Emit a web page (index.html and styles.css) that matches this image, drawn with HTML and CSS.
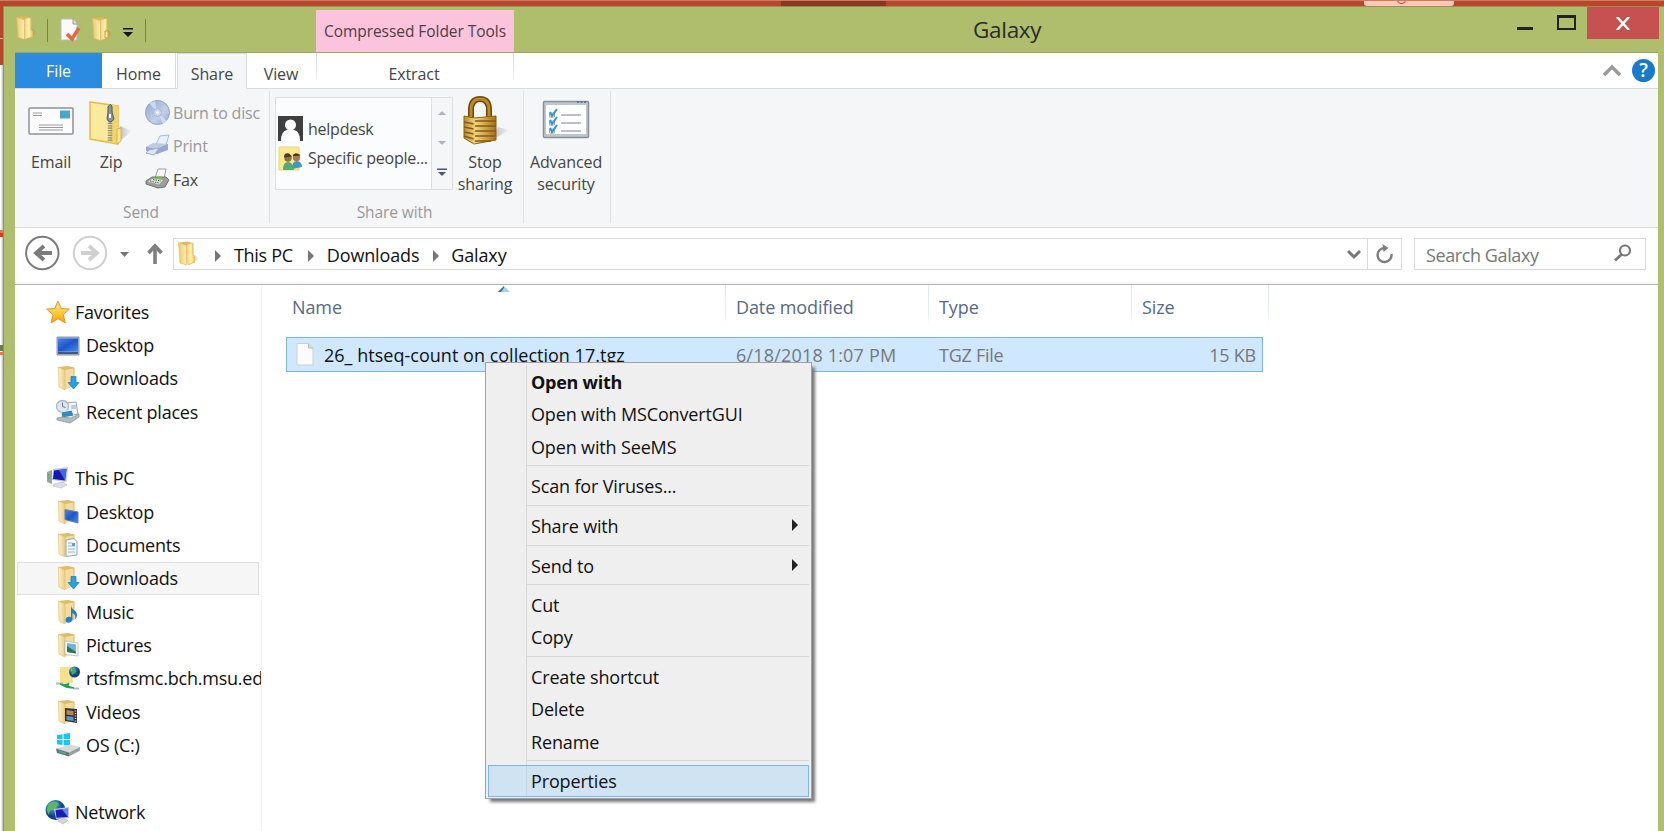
FILE: index.html
```html
<!DOCTYPE html>
<html lang="en"><head><meta charset="utf-8"><title>Galaxy</title><link rel="stylesheet" href="styles.css"></head>
<body>
<svg width="0" height="0" class="defs">
<defs>
<linearGradient id="gy" x1="0" x2="1"><stop offset="0" stop-color="#e9d489"/><stop offset=".5" stop-color="#fdf0b4"/><stop offset="1" stop-color="#ecc65c"/></linearGradient>
<linearGradient id="gold" x1="0" x2="1"><stop offset="0" stop-color="#b98a2a"/><stop offset=".35" stop-color="#f3d67e"/><stop offset="1" stop-color="#a8700f"/></linearGradient>
<linearGradient id="scr" x1="0" x2="1" y2="1"><stop offset="0" stop-color="#4f86e0"/><stop offset=".5" stop-color="#1d55cc"/><stop offset="1" stop-color="#4a8cf0"/></linearGradient>
<linearGradient id="disc" x1="0" x2="1" y2="1"><stop offset="0" stop-color="#8ea6cc"/><stop offset=".6" stop-color="#c3d0e8"/><stop offset="1" stop-color="#92aad2"/></linearGradient>
<radialGradient id="globe" cx=".35" cy=".3"><stop offset="0" stop-color="#bfe8f8"/><stop offset=".5" stop-color="#2f7ec4"/><stop offset="1" stop-color="#123f8c"/></radialGradient>
<linearGradient id="star" x1="0" x2="0" y2="1"><stop offset="0" stop-color="#ffe9a0"/><stop offset=".6" stop-color="#ffc62e"/><stop offset="1" stop-color="#f39a13"/></linearGradient>
<linearGradient id="shade" x1="0" x2="1"><stop offset="0" stop-color="#777" stop-opacity=".6"/><stop offset="1" stop-color="#888" stop-opacity="0"/></linearGradient>
<linearGradient id="front" x1="0" x2="1"><stop offset="0" stop-color="#ecc96c"/><stop offset="1" stop-color="#fbeeb5"/></linearGradient>
<linearGradient id="flap" x1="0" x2="1"><stop offset="0" stop-color="#fdf3c9"/><stop offset="1" stop-color="#eacb83"/></linearGradient>
<symbol id="folder" viewBox="0 0 24 24"><path d="M12 23.500l11-6.500-6-4z" fill="url(#shade)"/><path d="M3 1l7-.8 6.500 1.300V14l1.500 1v6l-7 2.500z" fill="#dfb955"/><path d="M10 3l5.500-1.300V14l2 1.200v5.300L10 23z" fill="url(#gy)"/><path d="M1.500 1l8 3v19.500l-6.500-2z" fill="url(#front)" stroke="#dbb95c" stroke-width=".6"/></symbol>
<symbol id="sfolder" viewBox="0 0 24 24"><path d="M3 1l9-1 6.500 1.500V20L9 23z" fill="#dcbb6a"/><path d="M9 4l8.500-1.500v17L9 23.500z" fill="#f4dc9c"/><path d="M2.500 1L9 4v20l-6-3z" fill="url(#flap)" stroke="#dcc07a" stroke-width=".7"/></symbol>
</defs></svg>
<div class="backdrop"><i class="seg dark"></i><i class="seg pale"></i></div>
<div class="edge"><i class="e1"></i><i class="e5"></i><i class="e2"></i><i class="e3"></i><i class="e4"></i></div>
<main class="window">
<header class="titlebar">
 <div class="quick">
  <svg class="q1" width="24" height="25"><use href="#folder" width="24" height="24"/></svg><i class="bar b1"></i>
  <svg class="q2" width="22" height="24" viewBox="0 0 22 24"><path d="M1 1h12l4 4v17H1z" fill="#fafafa" stroke="#bbb"/><path d="M13 1v5h4" fill="#ddd" stroke="#999"/><path d="M7 16l5 5 7-11" fill="none" stroke="#e8683c" stroke-width="3.600"/></svg>
  <svg class="q3" width="20" height="25"><use href="#folder" width="24" height="24"/><path d="M14 14h3v7h-3z" fill="#fff0b0" stroke="#cc9426"/></svg>
  <svg class="q4" width="10" height="10"><path d="M0 0h10v1.500H0zM0 4h10L5 9z" fill="#151515"/></svg><i class="bar b2"></i>
 </div>
 <div class="context">Compressed Folder Tools</div>
 <h1>Galaxy</h1>
 <div class="winbtns">
  <svg width="70" height="32"><path d="M0 20h16v3H0z" fill="#222"/><path d="M40 8h19v15H40zM42 11v10h15V11z" fill="#222" fill-rule="evenodd"/></svg>
  <div class="close"><svg width="14" height="13"><path d="M1 0l12 13M13 0L1 13" stroke="#fff" stroke-width="2.500"/></svg></div>
 </div>
</header>
<nav class="tabs">
 <div class="file">File</div><div class="tab home">Home</div><div class="tab share">Share</div><div class="tab view">View</div><div class="tab extract">Extract</div>
 <svg class="chev" width="18" height="13"><path d="M1 12l8-8 8 8" fill="none" stroke="#9b9b9b" stroke-width="3.600"/></svg>
 <div class="help">?</div>
</nav>
<section class="ribbon">
 <div class="group send"><div class="gbody">
  <div class="big email"><svg width="46" height="48" viewBox="0 0 46 48"><rect x="1" y="11" width="44" height="26" rx="1" fill="#fcfcfc" stroke="#8e9296" stroke-width="1.500"/><rect x="32" y="13.500" width="10" height="8" fill="#48a8cc"/><path d="M5 16h9M5 18.500h9M11 28h24M11 30.500h24M11 33h24" stroke="#999" stroke-width="1.200"/></svg><span>Email</span></div>
  <div class="big zip"><svg width="46" height="48" viewBox="0 0 46 48"><path d="M28 47l16-13-12-5z" fill="url(#shade)"/><path d="M2 5l28 4v38L2 42z" fill="#fbea9c" stroke="#e5bd4e" stroke-width="1.500"/><path d="M22 7l8 2v38l-8-2z" fill="#f2d46a"/><path d="M29 32l4-1v13l-4 3z" fill="#ffe790" stroke="#deb047"/><path d="M22 9v36" stroke="#85878a" stroke-width="4.500" stroke-dasharray="1.200 1.200"/><path d="M20 10q3-5 4 0v5l2 7q-4 6-7 0l1-7z" fill="#8493a8" stroke="#4e5967"/><path d="M21 17h2v4h-2z" fill="#fff"/></svg><span>Zip</span></div>
  <div class="smalls">
   <div class="dim"><svg width="25" height="25"><circle cx="12.500" cy="12.500" r="12" fill="url(#disc)" stroke="#93a5c6"/><path d="M12 12L4 3l6-2zM13 13l9 8-4 3z" fill="#dde5f2" opacity=".7"/><circle cx="12.500" cy="12.500" r="4" fill="#cdd7ea" stroke="#a5b4d0"/><circle cx="12.500" cy="12.500" r="1.300" fill="#fff"/></svg>Burn to disc</div>
   <div class="dim"><svg width="25" height="25"><path d="M11 11l4-8 9-1-3 10z" fill="#e9eff8" stroke="#a9bad6"/><path d="M1 14l7-3 15 0v6L12 21 1 18z" fill="#93a9cf"/><path d="M1 14l7-4 15 1-11 5z" fill="#bccae3"/><path d="M4 17l10-2-5 7-8-2z" fill="#dde6f3" stroke="#9bb0d2"/></svg>Print</div>
   <div><svg width="25" height="25"><path d="M10 11l3-9h8l-2 10z" fill="#f8f8f8" stroke="#9a9a9a"/><path d="M1 14l6-4h14l3 3-4 7-7 1L1 17z" fill="#9b9e99" stroke="#5f615d" stroke-width=".8"/><path d="M3 14.500l5-3 10 1.500-4 4.500z" fill="#e2e4e0"/><path d="M5 14l9 2M8 12.500l8 1.500" stroke="#555" stroke-dasharray="1.500 1"/><path d="M11 9.500h6v2h-6z" fill="#6cc43f"/></svg>Fax</div>
  </div></div><div class="gname">Send</div></div>
 <div class="group sharewith"><div class="gbody">
  <div class="gallery"><div class="people">
   <div><svg width="25" height="25"><path d="M0 0h25v25H0z" fill="#3f3f3f"/><circle cx="12.500" cy="9" r="5.500" fill="#fff"/><path d="M3 25q0-10 6-11h7q6 1 6 11z" fill="#fff"/></svg>helpdesk</div>
   <div><svg width="25" height="25"><path d="M1 1h20v23H1z" fill="#f8e88f" stroke="#ecd77b"/><circle cx="10" cy="12" r="3.700" fill="#926b40"/><path d="M6 11.500q0-5 5-4l3 3z" fill="#493823"/><circle cx="18.500" cy="11.500" r="3.700" fill="#a97a4c"/><path d="M14.500 10q2-5 8-1l-2 1z" fill="#493823"/><path d="M14 23q0-8 5-8 5 1 5 6z" fill="#4495c5"/><path d="M5 24q0-8 5-8t6 8z" fill="#53ac77"/></svg>Specific people...</div>
  </div><div class="scroll"><svg width="20" height="92"><path d="M6 17h8l-4-4zM6 43h8l-4 4z" fill="#aab3bd"/><path d="M5 70.500h10v1.500H5zM6 74h8l-4 4z" fill="#45577a"/></svg></div></div>
  <div class="big stop"><svg width="48" height="50" viewBox="0 0 48 50"><path d="M26 46L48 34l-12-3z" fill="url(#shade)"/><path d="M9 23V14Q9 3 18 3t9 11v9" fill="none" stroke="#6b4807" stroke-width="6"/><path d="M9 23V14Q9 3 18 3t9 11v9" fill="none" stroke="#b9892b" stroke-width="3"/><path d="M2 20l10 2 22-2v24l-22 4L2 42z" fill="url(#gold)" stroke="#8c611a"/><path d="M13 25h21M13 30h21M13 35h21M13 40h20M13 45h16M2 26l10 2M2 31l10 2M2 36l10 2M2 40l10 3" stroke="#85591a" stroke-width="1.700"/><path d="M12 22v26" stroke="#e7c76b"/></svg><span>Stop<br>sharing</span></div>
 </div><div class="gname">Share with</div></div>
 <div class="group adv"><div class="gbody"><div class="big"><svg width="48" height="48" viewBox="0 0 48 48"><rect x="1.500" y="4.500" width="45" height="36" rx="1" fill="#bfc6cd" stroke="#87909a" stroke-width="1.500"/><path d="M35 5h10" stroke="#5e7796" stroke-width="2" stroke-dasharray="2 1.500"/><path d="M4 8h40v29H4z" fill="#fff"/><path d="M19 18h20M19 26h20M19 34h20" stroke="#a9a7bd" stroke-width="1.500"/><path d="M7.500 16h5v4h-5zM7.500 24h5v4h-5zM7.500 32h5v4h-5z" fill="none" stroke="#a4a4a4"/><path d="M8 15l2 4 5-7M8 23l2 4 5-7M8 31l2 4 5-7" fill="none" stroke="#2f96d6" stroke-width="2"/></svg><span>Advanced<br>security</span></div></div></div>
</section>
<section class="navbar">
 <svg class="arrows" width="150" height="40"><g fill="none" stroke-width="2"><circle cx="18.300" cy="19" r="16.200" stroke="#7b7b7b"/><circle cx="66" cy="19" r="16.200" stroke="#cfcfcf"/></g><path d="M28 19H12m8-7l-8 7 8 7" fill="none" stroke="#7b7b7b" stroke-width="3.800"/><path d="M57 19h16m-8-7l8 7-8 7" fill="none" stroke="#d0d0d0" stroke-width="3.800"/><path d="M96 18h9l-4.500 5z" fill="#757575"/><path d="M131 30V12m-6.500 7l6.500-7 6.500 7" fill="none" stroke="#7f7f7f" stroke-width="3.600"/></svg>
 <div class="address"><svg class="af" width="24" height="25"><use href="#folder" width="24" height="25"/></svg><i class="tri t1"></i><span class="c1">This PC</span><i class="tri"></i><span class="c2">Downloads</span><i class="tri"></i><span class="c3">Galaxy</span>
  <svg class="drop" width="14" height="12"><path d="M1 3l6 6 6-6" fill="none" stroke="#777" stroke-width="3"/></svg>
  <div class="refresh"><svg width="20" height="20" viewBox="0 0 20 20"><path d="M9.500 4A7 7 0 1 0 16.500 10" fill="none" stroke="#7d7d7d" stroke-width="2.400"/><path d="M7.500 0l6 4-5 4z" fill="#7d7d7d"/></svg></div></div>
 <div class="search"><span>Search Galaxy</span><svg width="18" height="18"><circle cx="11" cy="6.500" r="5" fill="none" stroke="#777" stroke-width="2.200"/><path d="M7.500 10.500L1 16.500" stroke="#777" stroke-width="2.800"/></svg></div>
</section>
<section class="content">
 <aside>
  <div class="root"><svg><path d="M12 1l3.300 7.500 8 .6-6 5.400 2 8.500-7.300-4.300L5 23l2-8.400L.7 9.100l8-.6z" fill="url(#star)" stroke="#e9932b"/></svg>Favorites</div>
  <div><svg><path d="M1 4h22v18H1z" fill="#9fb0cc" stroke="#8798b5"/><path d="M2 5.500h20v13H2z" fill="url(#scr)"/><path d="M2 19h20v2H2z" fill="#44587a"/></svg>Desktop</div>
  <div><svg><use href="#sfolder"/><path d="M15 10.500h5v6h3l-5.500 6.500L12 16.500h3z" fill="#28a1e4" stroke="#1479b9" stroke-width=".7"/></svg>Downloads</div>
  <div><svg><path d="M9 3l11-1 2 12-12 2z" fill="#f3f8fb" stroke="#98a5af"/><circle cx="6.500" cy="6.500" r="6" fill="#dce8ee" stroke="#a9bac5" stroke-width="1.300"/><path d="M6.500 2.500v4l3 1" stroke="#678" fill="none"/><path d="M15 5h5v4h-5z" fill="#b9cfe0"/><path d="M5 12l11-2 2 6-12 2z" fill="#3489c2" stroke="#eee"/><path d="M1 18l5-1 9 1 8-4v3l-9 6L1 20z" fill="#b4bbc0" stroke="#858d93" stroke-width=".7"/></svg>Recent places</div>
  <p></p>
  <div class="root"><svg><path d="M1 6l5-2v14l-5-2z" fill="#9ba2ab"/><path d="M1.500 8h2v5h-2z" fill="#4cc05a"/><path d="M7 3l15-2-1.500 15-14.500-2z" fill="#bfc8d6"/><path d="M8 4.500l12.500-1.500-1.500 11.500-12-1.500z" fill="#1119b4"/><path d="M13 4l7.500-1-1.500 11.500z" fill="#4468dd"/><path d="M8 18l9-2 4 3-6 3-8-2z" fill="#dcdfe2" stroke="#aaa" stroke-width=".5"/></svg>This PC</div>
  <div><svg><use href="#sfolder"/><path d="M9 9.500l13 2.500v11l-13-3.500z" fill="url(#scr)" stroke="#6880a5"/></svg>Desktop</div>
  <div><svg><use href="#sfolder"/><path d="M10 7l8-1.500 3 3V22l-11 1.500z" fill="#f2f7fa" stroke="#98a6b0"/><path d="M12 10h4m-4 3h7m-7 3h7m-7 3h7" stroke="#9ab4ca"/><path d="M16 10h3v3h-3z" fill="#5aa0c8"/></svg>Documents</div>
  <div class="sel"><svg><use href="#sfolder"/><path d="M15 10.500h5v6h3l-5.500 6.500L12 16.500h3z" fill="#28a1e4" stroke="#1479b9" stroke-width=".7"/></svg>Downloads</div>
  <div><svg><use href="#sfolder"/><path d="M15 5c0 5 6 5 6 10 0 2-1 4-2 4 1-4-1-5-2.500-6v7c-1 3-7 4-7 0 0-3 3-4 5.500-3z" fill="#247fc8"/></svg>Music</div>
  <div><svg><use href="#sfolder"/><path d="M9 8l13 2v13L9 21.500z" fill="#fff" stroke="#aaa" stroke-width=".7"/><path d="M11 10l9 1.500v9L11 19z" fill="#6ab4e4"/><path d="M11 13l9 6v1.500L11 19z" fill="#2a784d"/></svg>Pictures</div>
  <div><svg><path d="M4 1h13v16H4z" fill="#f9e08b"/><circle cx="18.500" cy="6" r="5.500" fill="url(#globe)"/><path d="M16 2q5 1 4 4l-4 3z" fill="#45ac4c"/><path d="M0 17.500h7m10 5h6" stroke="#b6bbb8" stroke-width="2"/><path d="M4 18q7 1 9-1l-1 3 6 2q-8 1-14-4z" fill="#18a552" stroke="#18a552"/></svg>rtsfmsmc.bch.msu.ed</div>
  <div><svg><use href="#sfolder"/><path d="M9 8l12 1v14L9 21z" fill="#333"/><path d="M10.500 10l7 1v4.500l-7-1z" fill="#b88757"/><path d="M10.500 16l7 1v4l-7-1z" fill="#519dd1"/><path d="M19.500 10.500V22" stroke="#ddd" stroke-width="1.500" stroke-dasharray="1 1.500"/></svg>Videos</div>
  <div><svg><path d="M1 2l5.500-.8V6H1zM7.500 1L14 0v6H7.500zM1 7h5.500v5L1 11.300zM7.500 7H14v6l-6.500-.8z" fill="#12c8f4"/><path d="M0 15.500l14-4 10 2.500-11 5.500z" fill="#d7d9db"/><path d="M0 15.500l13 4v4L1 20z" fill="#6b7073"/><path d="M13 19.500l11-5.500v3.500l-11 6z" fill="#999fa2"/><path d="M3 18.500l7 2" stroke="#38b79c" stroke-width="1.800"/></svg>OS (C:)</div>
  <p></p>
  <div class="root net"><svg><circle cx="9.500" cy="10" r="10" fill="url(#globe)"/><path d="M3 4q7-5 10 0l-5 6q-5-1-5 5-4-5 0-11z" fill="#5cb85a"/><path d="M8 9l15-2v11L10 19z" fill="#c3cbd8"/><path d="M9.500 10l12.500-1.500v8.500l-11.500.7z" fill="#161db8"/><path d="M16 9.500l6-1V17z" fill="#5e87ee"/><path d="M12 21l6-2.500 4 2-5 3.500z" fill="#d2d6da" stroke="#aaa" stroke-width=".5"/></svg>Network</div>
 </aside>
 <div class="files">
  <div class="cols"><div class="cn">Name<svg width="12" height="6"><path d="M0 6l6-6 6 6z" fill="#a7d3ea"/><path d="M0 6l6-6v2L3 6z" fill="#3b6f92"/></svg></div><div>Date modified</div><div>Type</div><div class="cs">Size</div></div>
  <div class="row"><div class="rn"><svg width="18" height="23"><path d="M1 .5h11.500L17 5v17H1z" fill="#fbfbfb" stroke="#cfcfcf"/><path d="M12.500.5V5H17" fill="#ddd" stroke="#bbb"/></svg>26_ htseq-count on collection 17.tgz</div><div class="rd">6/18/2018 1:07 PM</div><div>TGZ File</div><div class="rs">15 KB</div></div>
 </div>
</section>
</main>
<div class="menu">
 <div class="b">Open with</div><div>Open with MSConvertGUI</div><div>Open with SeeMS</div><hr>
 <div>Scan for Viruses...</div><hr>
 <div class="sub">Share with</div><hr>
 <div class="sub">Send to</div><hr>
 <div>Cut</div><div>Copy</div><hr>
 <div>Create shortcut</div><div>Delete</div><div>Rename</div><hr>
 <div class="hot">Properties</div>
</div>
</body></html>
```
FILE: styles.css
```css
*{box-sizing:border-box}
body{margin:0;width:1664px;height:831px;overflow:hidden;position:relative;background:#eee;font:18px/24px "Open Sans",sans-serif;letter-spacing:-.25px;color:#111;white-space:nowrap}
svg{display:block;flex:none}
.defs{position:absolute}
.backdrop{height:6px;background:#b7472a;border-top:1px solid #cc7c66;display:flex;overflow:hidden}
.seg{height:6px;overflow:hidden;flex:none}
.dark{width:105px;margin-left:781px;background:#8c3520}
.pale{width:90px;margin-left:478px;background:#fdc8b5;border-radius:0 0 3px 3px;margin-top:-1px;position:relative}
.pale::after{content:"";position:absolute;left:33px;top:-4px;width:7px;height:6px;border:1px solid #b7472a;border-radius:0 0 4px 4px}
.edge{position:absolute;left:0;top:6px;width:3px;height:825px;background:linear-gradient(90deg,#fff,#fff 1px,#d9d9dc 2px,#b9b9be)}
.edge i{position:absolute;left:0;width:3px}
.e1{top:0;height:59px;background:#b7472a}.e5{top:32px;height:1px;background:#e9c0b4}.e2{top:224px;height:7px;background:linear-gradient(#ee7256 3px,#c8402a 3px)}.e3{top:339px;height:6px;background:#6f7a4a}.e4{top:346px;height:3px;background:#ee7256}
.window{margin-left:3px;height:825px;background:#afbe6d;border:1px solid #8b9757;border-bottom:0;border-right:0;padding-left:11px;padding-right:6px;display:flex;flex-direction:column}
.titlebar{height:46px;display:flex;border-bottom:1px solid #9caa60;position:relative;flex:none}
.quick{display:flex;width:301px;flex:none;align-items:flex-start}
.quick svg,.quick .bar{flex:none}
.q1{margin-top:9px}
.bar{width:1px;height:23px;background:#76824a;margin-top:12px}
.b1{margin-left:8px}.q2{margin:11px 0 0 12px}.q3{margin:10px 0 0 9px}.q4{margin:21px 0 0 12px}.b2{margin-left:12px}
.context{width:198px;margin-top:3px;background:#fbc3dc;font-size:15.500px;line-height:43px;text-align:center;color:#4c3f46;letter-spacing:-.05px}
h1{font-weight:400;font-size:22.500px;letter-spacing:-.3px;line-height:46px;margin:0 0 0 459px;color:#2b2b2b}
.winbtns{margin-left:auto;margin-right:-1px;display:flex;height:32px}
.close{width:72px;background:#c75050;display:flex;align-items:center;justify-content:center}
.tabs{height:36px;background:#fff;border-bottom:1px solid #d9dbdc;display:flex;font-size:16px;letter-spacing:-.1px;line-height:42px;color:#444;flex:none}
.file{width:87px;background:#2a8be0;color:#fff;text-align:center;line-height:36px}
.tab{text-align:center;height:35px}
.home{width:74px;border-right:1px solid #d9dbdc}
.share{width:70px;margin-left:1px;height:36px;background:#f5f6f7;border:1px solid #d9dbdc;border-width:1px 1px 0;line-height:40px}
.view{width:68px}
.extract{width:198px;margin-left:1px;border:1px solid;border-image:linear-gradient(#d5d5d5,#f2f2f2) 1;border-width:0 1px;height:27px;padding-right:2px}
.chev{margin:10px 0 0 1089px}
.help{width:23px;height:23px;border-radius:50%;background:#1979ca;color:#fff;font-weight:600;font-size:19px;line-height:23px;text-align:center;margin:6px 0 0 11px}
.ribbon{height:139px;background:#f5f6f7;border-bottom:1px solid #dadbdc;display:flex;font-size:16px;letter-spacing:-.1px;line-height:22px;color:#444;padding-top:2px;flex:none}
.group{height:132px;border-right:1px solid #e0e1e3;display:flex;flex-direction:column}
.gbody{display:flex;height:111px}
.gname{text-align:center;color:#999;font-size:15.500px}
.send{width:255px}.sharewith{width:254px}.adv{width:87px}
.send .gname{padding-right:2px}.sharewith .gname{padding-right:4px}
.big{display:flex;flex-direction:column;align-items:center;text-align:center;padding-top:6px}
.email{margin-left:13px;width:46px}.zip{margin-left:14px;width:46px}
.big span{margin-top:6px}
.smalls{margin-left:11px;padding-top:9px}
.smalls div{display:flex;height:33.300px;align-items:flex-start;gap:3px;line-height:26px;letter-spacing:-.2px}
.smalls .dim{color:#999}
.gallery{margin:6px 0 0 5px;width:178px;height:93px;border:1px solid #dcdee2;background:#fbfcfd;display:flex;font-size:16px;letter-spacing:-.25px}
.people{width:155px;padding:18px 0 0 2px}
.people div{display:flex;gap:5px;height:30px;line-height:26px}
.people div+div{line-height:24px}
.scroll{border-left:1px solid #dcdee2;background:#f5f6f7;width:21px}
.stop{padding-top:5px;margin-left:6px;width:54px}.stop span{margin:5px 0 0 -2px}.stop svg{margin-left:-1px}
.adv .big{width:84px}
.navbar{height:57px;background:#fff;border-bottom:1px solid #b4b4b4;box-shadow:inset 0 -2px #f6f6f6;display:flex;padding-top:10px;flex:none;font-size:18px}
.arrows{margin:-4px 0 0 9px}
.address{margin-left:-1px;width:1229px;height:32px;border:1px solid #d9d9d9;display:flex;align-items:center;flex:none;line-height:30px;letter-spacing:-.15px}
.af{margin:-1px 0 0 3px}
.tri{width:0;height:0;border:6px solid transparent;border-left-color:#777;border-right:0;margin:3px 0 0 14px}
.t1{margin-left:14px}.address span{margin-left:13px;padding-top:1px}.address .c1{letter-spacing:-.3px}.address .c3{margin-left:12px}
.address .c1+.tri{margin-left:15px}
.drop{margin-left:auto;margin-right:6px}
.refresh{width:34px;height:30px;border-left:1px solid #d9d9d9;display:flex;align-items:center;justify-content:center}
.search{margin-left:12px;width:232px;height:32px;border:1px solid #d9d9d9;display:flex;color:#777;line-height:33px;padding:0 13px 0 11px;justify-content:space-between;letter-spacing:-.4px}
.search svg{margin-top:5px}
.content{display:flex;flex:1;background:#fff;min-height:0}
aside{width:247px;border-right:1px solid #f4f4f4;padding:10px 2px 0 2px;flex:none;overflow:hidden;font-size:18px;letter-spacing:-.22px}
aside div{height:33.350px;display:flex;align-items:center;padding-left:38px;gap:6px;line-height:28px;border:1px solid transparent;margin-top:0}
aside p{margin:0;height:33.350px}
aside svg{width:24px;height:24px;overflow:visible}
aside .root{padding-left:28px;gap:5px}
aside .sel{background:#f6f6f6;border-color:#dedede}
.files{width:1020px;flex:none}
.cols{display:flex;height:40px;margin-left:24px;color:#566a86;line-height:44px;letter-spacing:-.1px}
.cols div{width:203px;flex:none;padding-left:10px;border-right:1px solid;border-image:linear-gradient(#dbe8f6,#e5eef8 70%,#fff) 1;border-width:0 1px 0 0}
.cols .cn{width:440px;padding-left:6px;position:relative}
.cn svg{position:absolute;left:212px;top:1px}
.cols .cs{width:137px}
.row{margin:12px 0 0 24px;width:977px;height:35px;background:#cfe7ff;border:1px solid #7bb5ec;display:flex;line-height:34px;color:#777}
.row div{width:203px;flex:none;padding-left:9px}
.row .rn{width:440px;color:#111;display:flex;gap:10px;letter-spacing:.02px}
.row .rd{letter-spacing:.18px}
.rn svg{margin-top:5px}
.row .rs{width:129px;text-align:right;padding-right:6px}
.menu{position:absolute;left:485px;top:362px;width:327px;height:437px;background:linear-gradient(#d7d7d7,#d7d7d7) 40px 2px/1px 431px no-repeat #efefef;border:1px solid #a0a0a0;box-shadow:4px 4px 3px -1px #777;padding:3px 2px;font-size:18px;letter-spacing:-.15px}
.menu div{height:32.400px;line-height:32px;padding-left:43px;color:#111;position:relative}
.menu .b{font-weight:700;letter-spacing:-.25px}
.menu hr{height:1px;border:0;margin:2.200px 0 4px 39px;background:#d7d7d7}
.sub::after{content:"";position:absolute;right:11px;top:9px;border:6px solid transparent;border-left-color:#222;border-right:0}
.menu .hot{background:rgba(178,215,247,.5);outline:1px solid #7eb4ea;outline-offset:-1px;height:32px;margin-top:-.5px}
```
